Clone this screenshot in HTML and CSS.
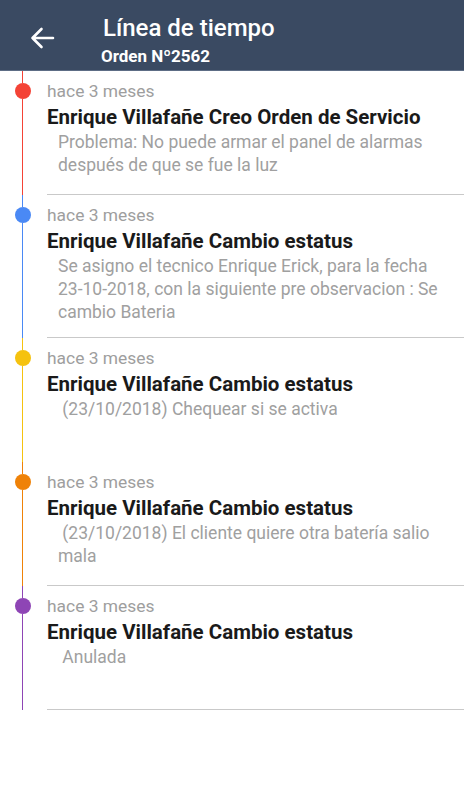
FILE: index.html
```html
<!DOCTYPE html>
<html lang="es">
<head>
  <meta charset="UTF-8" />
  <meta name="viewport" content="width=device-width, initial-scale=1.0"/>
  <title>Línea de tiempo</title>
  <link rel="stylesheet" href="styles.css">
</head>
<body>
  <header class="toolbar">
    <button class="back" aria-label="Volver">
      <svg width="26" height="22" viewBox="0 0 26 22">
        <path d="M24 11H3.5M12.5 2L3.5 11l9 9" fill="none" stroke="#ffffff" stroke-width="2.6" stroke-linecap="round" stroke-linejoin="round"/>
      </svg>
    </button>
    <div class="titles">
      <h1>Línea de tiempo</h1>
      <div class="subtitle">Orden Nº2562</div>
    </div>
  </header>

  <ul class="timeline">
    <li class="event red">
      <div class="rail"><span class="seg top"></span><span class="dot"></span><span class="seg rest"></span></div>
      <div class="body">
        <div class="time">hace 3 meses</div>
        <div class="who">Enrique Villafañe Creo Orden de Servicio</div>
        <p class="desc">Problema: No puede armar el panel de alarmas después de que se fue la luz</p>
      </div>
    </li>
    <li class="event blue">
      <div class="rail"><span class="seg top"></span><span class="dot"></span><span class="seg rest"></span></div>
      <div class="body">
        <div class="time">hace 3 meses</div>
        <div class="who">Enrique Villafañe Cambio estatus</div>
        <p class="desc">Se asigno el tecnico Enrique Erick, para la fecha 23-10-2018, con la siguiente pre observacion : Se cambio Bateria</p>
      </div>
    </li>
    <li class="event yellow">
      <div class="rail"><span class="seg top"></span><span class="dot"></span><span class="seg rest"></span></div>
      <div class="body no-line">
        <div class="time">hace 3 meses</div>
        <div class="who">Enrique Villafañe Cambio estatus</div>
        <p class="desc">&nbsp;(23/10/2018) Chequear si se activa</p>
      </div>
    </li>
    <li class="event orange">
      <div class="rail"><span class="seg top"></span><span class="dot"></span><span class="seg rest"></span></div>
      <div class="body">
        <div class="time">hace 3 meses</div>
        <div class="who">Enrique Villafañe Cambio estatus</div>
        <p class="desc">&nbsp;(23/10/2018) El cliente quiere otra batería salio mala</p>
      </div>
    </li>
    <li class="event purple">
      <div class="rail"><span class="seg top"></span><span class="dot"></span><span class="seg rest"></span></div>
      <div class="body">
        <div class="time">hace 3 meses</div>
        <div class="who">Enrique Villafañe Cambio estatus</div>
        <p class="desc">&nbsp;Anulada</p>
      </div>
    </li>
  </ul>
</body>
</html>
```

FILE: styles.css
```css
body {
  margin: 0;
  background: #ffffff;
  font-family: Roboto, "Noto Sans", sans-serif;
}

.toolbar {
  height: 71px;
  box-sizing: border-box;
  background: #3a4a62;
  border-bottom: 1px solid #5d6d85;
  display: flex;
  align-items: flex-start;
}

.back {
  width: 103px;
  height: 70px;
  padding: 6px 0 0 29px;
  margin: 0;
  border: none;
  background: none;
  display: flex;
  align-items: center;
  cursor: pointer;
}

.titles {
  color: #ffffff;
  padding-top: 14px;
}

.titles h1 {
  margin: 0;
  font-size: 24px;
  font-weight: 500;
  line-height: 28px;
}

.subtitle {
  margin: 4px 0 0 -2px;
  font-size: 17px;
  font-weight: 700;
  line-height: 20px;
}

.timeline {
  list-style: none;
  margin: 0;
  padding: 0;
}

.event {
  display: flex;
  min-height: 124px;
}

/* timeline rail: line + dot */
.rail {
  width: 47px;
  flex-shrink: 0;
  display: flex;
  flex-direction: column;
  align-items: flex-start;
  padding-left: 15px;
  box-sizing: border-box;
}

.seg {
  width: 1px;
  margin-left: 7px;
  background: var(--c);
}

.seg.top {
  height: 12px;
}

.seg.rest {
  flex: 1;
}

.dot {
  width: 16px;
  height: 16px;
  border-radius: 50%;
  background: var(--c);
}

.red { --c: #f44336; }
.blue { --c: #4a89f5; }
.yellow { --c: #f5c20f; }
.orange { --c: #ef8208; }
.purple { --c: #8e45b5; }

.body {
  flex: 1;
  padding: 10px 10px 13px 0;
  border-bottom: 1px solid #c9c9c9;
}

.body.no-line {
  border-bottom-color: transparent;
}

.time {
  font-size: 17.4px;
  line-height: 20px;
  color: #9e9e9e;
}

.who {
  margin-top: 3px;
  font-size: 20.5px;
  font-weight: 700;
  line-height: 26px;
  color: #1a1a1a;
}

.desc {
  margin: 1px 0 0 11px;
  font-size: 17.5px;
  line-height: 23px;
  color: #a0a0a0;
}
```
